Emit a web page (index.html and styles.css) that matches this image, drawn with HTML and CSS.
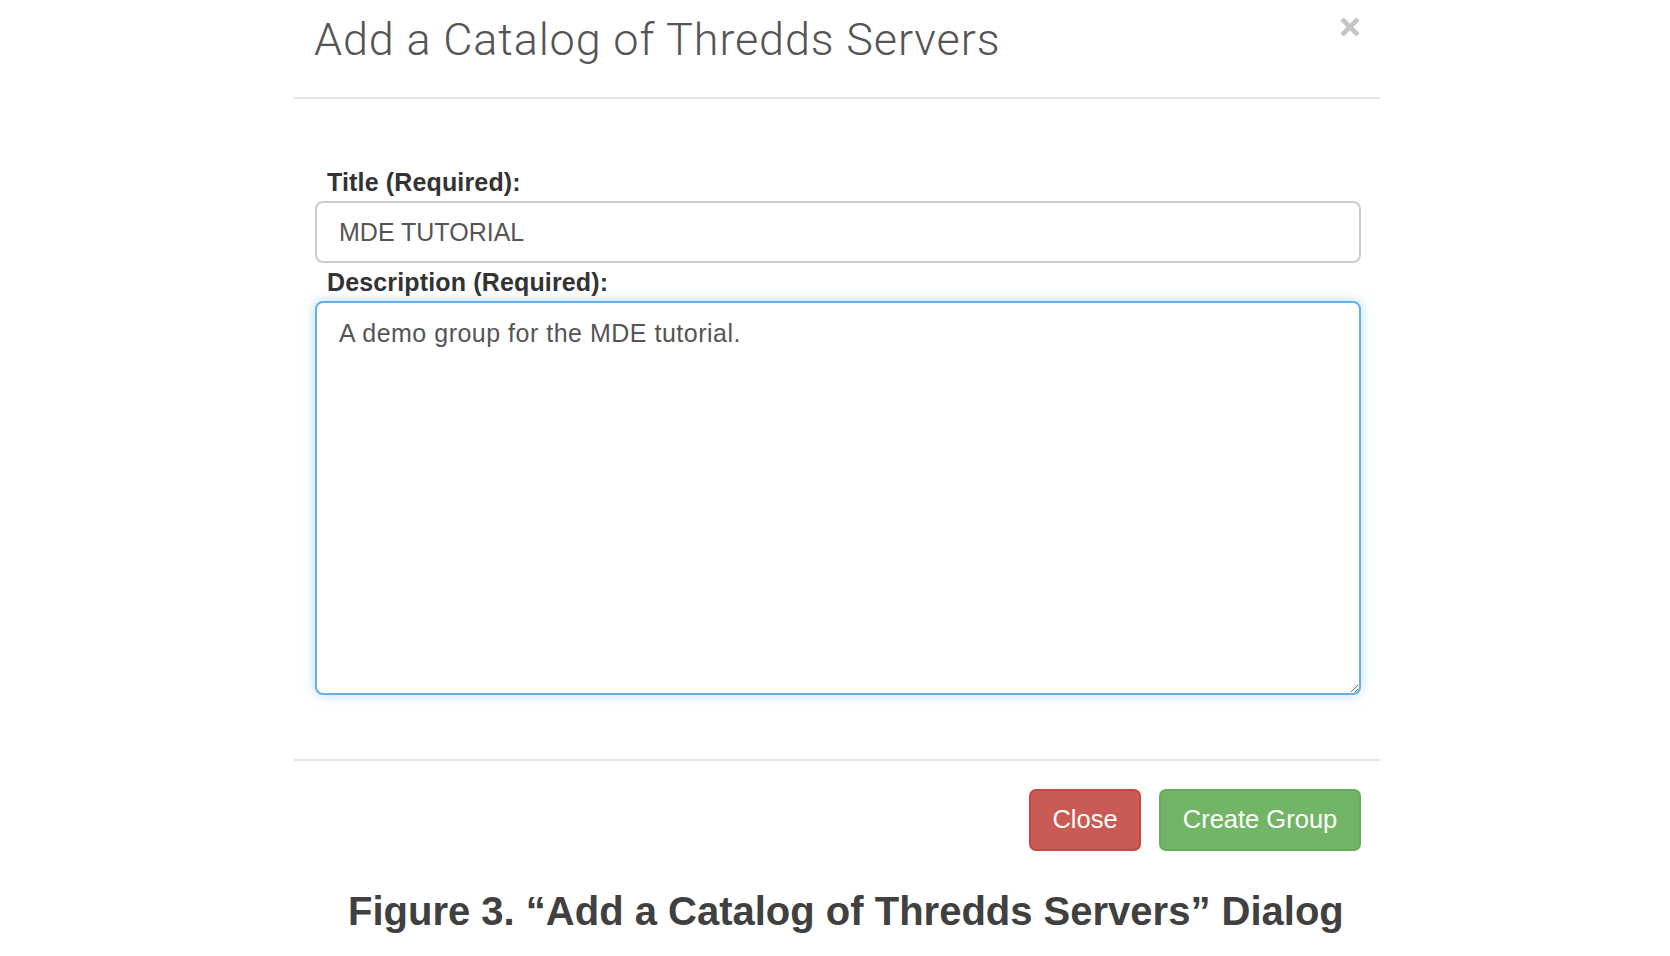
FILE: index.html
```html
<!DOCTYPE html>
<html>
<head>
<meta charset="utf-8">
<title>Add a Catalog of Thredds Servers</title>
<link rel="stylesheet" href="styles.css">
</head>
<body>
<div class="modal">
  <div class="modal-header">
    <h3 class="modal-title">Add a Catalog of Thredds Servers</h3>
    <button class="close" aria-label="Close">
      <svg width="20" height="18" viewBox="0 0 20 18"><path d="M2 1 L18 17 M18 1 L2 17" stroke="#c4c4c4" stroke-width="4.6" fill="none"/></svg>
    </button>
  </div>
  <div class="modal-body">
    <label class="field-label">Title (Required):</label>
    <input class="text-input" type="text" value="MDE TUTORIAL">
    <label class="field-label second">Description (Required):</label>
    <textarea class="text-area">A demo group for the MDE tutorial.</textarea>
  </div>
  <div class="modal-footer">
    <button class="btn btn-danger">Close</button>
    <button class="btn btn-success">Create Group</button>
  </div>
</div>
<p class="caption">Figure 3. “Add a Catalog of Thredds Servers” Dialog</p>
</body>
</html>
```
FILE: styles.css
```css
html, body {
  margin: 0;
  padding: 0;
  background: #ffffff;
}
body {
  font-family: "Liberation Sans", Arial, sans-serif;
  color: #333333;
}
.modal {
  width: 1086px;
  margin-left: 294px;
}
.modal-header {
  display: flex;
  justify-content: space-between;
  align-items: flex-start;
  padding: 15px 20px 32px 20px;
  border-bottom: 2px solid #e5e5e5;
}
.modal-title {
  margin: 0;
  font-family: Roboto, "Liberation Sans", sans-serif;
  font-weight: 300;
  font-size: 45px;
  line-height: 1.1;
  letter-spacing: 0.85px;
  color: #555555;
}
.close {
  border: 0;
  background: transparent;
  padding: 0;
  margin-top: 3px;
  width: 20px;
  height: 18px;
  line-height: 0;
}
.modal-body {
  display: flex;
  flex-direction: column;
  padding: 68px 19px 64px 21px;
  border-bottom: 2px solid #e5e5e5;
}
.field-label {
  display: block;
  font-weight: bold;
  font-size: 25px;
  line-height: 30px;
  padding-left: 12px;
  margin-bottom: 4px;
  letter-spacing: 0.15px;
  color: #333333;
}
.field-label.second {
  margin-top: 4px;
}
.text-input {
  box-sizing: border-box;
  height: 62px;
  width: 100%;
  border: 2px solid #cccccc;
  border-radius: 8px;
  padding: 2px 22px 0 22px;
  margin: 0;
  font-family: "Liberation Sans", Arial, sans-serif;
  font-size: 25px;
  color: #555555;
  background: #fff;
  outline: none;
}
.text-area {
  box-sizing: border-box;
  height: 394px;
  width: 100%;
  margin: 0;
  border: 2px solid #66afe9;
  border-radius: 8px;
  padding: 13px 22px;
  font-family: "Liberation Sans", Arial, sans-serif;
  font-size: 25px;
  line-height: 1.4;
  letter-spacing: 0.5px;
  color: #555555;
  background: #fff;
  box-shadow: 0 0 12px rgba(102, 175, 233, 0.45);
  outline: none;
  resize: vertical;
}
.modal-footer {
  display: flex;
  justify-content: flex-end;
  gap: 18px;
  padding: 28px 19px 0 0;
}
.btn {
  box-sizing: border-box;
  height: 62px;
  border-radius: 7px;
  font-family: "Liberation Sans", Arial, sans-serif;
  font-size: 25.5px;
  color: #ffffff;
  padding: 0;
}
.btn-danger {
  width: 112px;
  background: #c95b54;
  border: 2px solid #c24a43;
}
.btn-success {
  width: 202px;
  background: #72b566;
  border: 2px solid #68ad5c;
}
.caption {
  margin: 36px 0 0 348px;
  font-family: "Liberation Sans", Arial, sans-serif;
  font-weight: bold;
  font-size: 40px;
  line-height: 1.2;
  color: #404040;
  white-space: nowrap;
}
```
